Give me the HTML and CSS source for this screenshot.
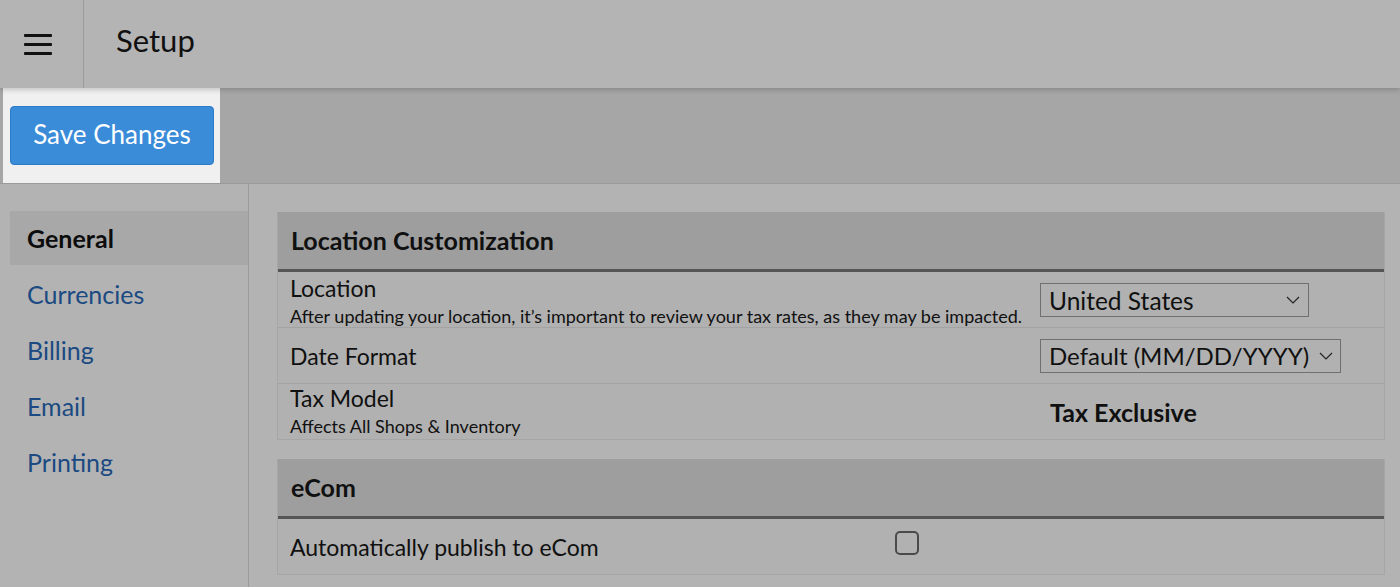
FILE: index.html
```html
<!DOCTYPE html>
<html>
<head>
  <meta charset="UTF-8">
  <title>Setup</title>
  <link rel="stylesheet" href="styles.css">
</head>
<body>
  <div class="header">
    <div class="menu">
      <svg width="28" height="22" viewBox="0 0 28 22">
        <rect x="0" y="1" width="28" height="3" rx="1" fill="#111"/>
        <rect x="0" y="10" width="28" height="3" rx="1" fill="#111"/>
        <rect x="0" y="19" width="28" height="3" rx="1" fill="#111"/>
      </svg>
    </div>
    <div class="title">Setup</div>
  </div>

  <div class="toolbar">
    <div class="highlight">
      <button class="save">Save Changes</button>
    </div>
  </div>

  <div class="layout">
    <div class="sidebar">
      <div class="nav active">General</div>
      <div class="nav">Currencies</div>
      <div class="nav">Billing</div>
      <div class="nav">Email</div>
      <div class="nav">Printing</div>
    </div>

    <div class="main">
      <div class="panel">
        <div class="panel-head">Location Customization</div>
        <div class="row row-loc">
          <div class="label">
            <div class="name">Location</div>
            <div class="hint">After updating your location, it’s important to review your tax rates, as they may be impacted.</div>
          </div>
          <div class="control">
            <div class="select sel-country">
              <span>United States</span>
              <svg width="14" height="8" viewBox="0 0 14 8"><path d="M1 1 L7 7 L13 1" fill="none" stroke="#222" stroke-width="1.2"/></svg>
            </div>
          </div>
        </div>
        <div class="row row-date">
          <div class="label">
            <div class="name">Date Format</div>
          </div>
          <div class="control">
            <div class="select sel-date">
              <span>Default (MM/DD/YYYY)</span>
              <svg width="14" height="8" viewBox="0 0 14 8"><path d="M1 1 L7 7 L13 1" fill="none" stroke="#222" stroke-width="1.2"/></svg>
            </div>
          </div>
        </div>
        <div class="row row-tax">
          <div class="label">
            <div class="name">Tax Model</div>
            <div class="hint">Affects All Shops &amp; Inventory</div>
          </div>
          <div class="control">
            <div class="value">Tax Exclusive</div>
          </div>
        </div>
      </div>

      <div class="panel">
        <div class="panel-head">eCom</div>
        <div class="row row-ecom">
          <div class="label">
            <div class="name">Automatically publish to eCom</div>
          </div>
          <div class="control">
            <div class="checkbox"></div>
          </div>
        </div>
      </div>
    </div>
  </div>
</body>
</html>
```

FILE: styles.css
```css
body { margin: 0; background: #b3b3b3; color: #101010; font-family: Lato, "Open Sans", sans-serif; }

.header { height: 88px; display: flex; background: #b4b4b4; position: relative; z-index: 2; box-shadow: 0 2px 5px rgba(0,0,0,0.18); }
.menu { width: 84px; border-right: 1px solid #9c9c9c; display: flex; align-items: center; padding-left: 24px; box-sizing: border-box; }
.title { font-size: 31px; line-height: 88px; padding-left: 32px; margin-top: -4px; }

.toolbar { height: 95px; background: #a6a6a6; border-bottom: 1px solid #9a9a9a; display: flex; }
.highlight { margin-left: 3px; width: 217px; background: #f0f0f0; padding: 18px 0 0 7px; box-sizing: border-box; }
.save { width: 204px; height: 59px; background: #3a8bd8; border: 1px solid #2d7bc6; border-radius: 4px; color: #fff; font-family: Lato, sans-serif; font-size: 26px; padding: 0 0 3px; }

.layout { display: flex; height: 403px; }
.sidebar { width: 248px; border-right: 1px solid #9c9c9c; padding-top: 27px; box-sizing: content-box; }
.nav { margin-left: 10px; height: 54px; margin-bottom: 2px; padding-left: 17px; line-height: 54px; font-size: 25px; color: #1b4a82; }
.nav.active { background: #a8a8a8; color: #0c0c0c; font-weight: bold; }

.main { flex: 1; padding: 28px 15px 0 28px; }
.panel { border: 1px solid #a6a6a6; border-top: none; margin-bottom: 19px; background: #b1b1b1; }
.panel-head { height: 57px; background: #9e9e9e; border-bottom: 3px solid #555; font-size: 25px; font-weight: bold; line-height: 57px; padding-left: 13px; }

.row { display: grid; grid-template-columns: 762px 1fr; border-bottom: 1px solid #a3a3a3; align-items: center; }
.row:last-child { border-bottom: none; }
.label { padding-left: 12px; }
.name { font-size: 23px; line-height: 26px; }
.hint { font-size: 18px; line-height: 20px; }

.row-loc { height: 55px; }
.row-loc .label { align-self: start; padding-top: 3px; }
.row-loc .hint { margin-top: 5px; }
.row-date { height: 55px; }
.row-tax { height: 55px; }
.row-tax .label { align-self: start; padding-top: 1px; }
.row-tax .hint { margin-top: 5px; }
.row-ecom { height: 55px; grid-template-columns: 617px 1fr; }

.select { height: 34px; border: 1px solid #6f6f6f; box-sizing: border-box; display: flex; align-items: center; justify-content: space-between; padding: 0 8px 0 8px; font-size: 24.5px; }
.sel-country { width: 269px; margin-top: 1px; }
.sel-date { width: 301px; padding-right: 7px; font-size: 24px; }
.value { font-size: 25px; font-weight: bold; padding-left: 10px; }
.checkbox { width: 20px; height: 20px; border: 2px solid #4a4a4a; border-radius: 5px; margin-top: -8px; }
```
